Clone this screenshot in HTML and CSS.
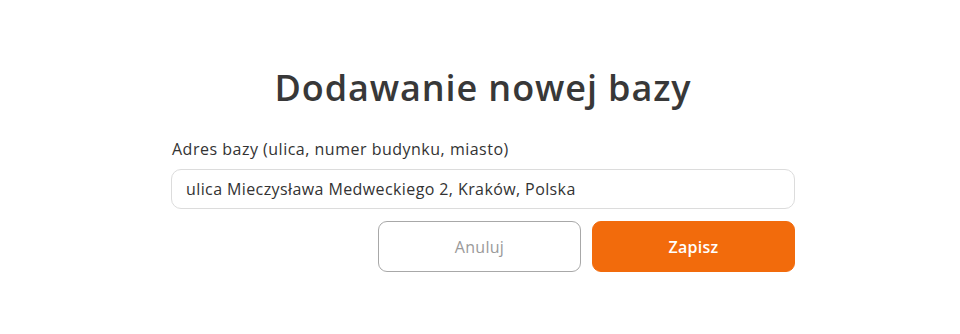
FILE: index.html
```html
<!DOCTYPE html>
<html lang="pl">
<head>
<meta charset="utf-8">
<link rel="stylesheet" href="styles.css">
</head>
<body>
<div class="page">
  <form class="card">
    <h1 class="title">Dodawanie nowej bazy</h1>
    <label class="label" for="addr">Adres bazy (ulica, numer budynku, miasto)</label>
    <div class="input" id="addr">ulica Mieczysława Medweckiego 2, Kraków, Polska</div>
    <div class="actions">
      <button type="button" class="btn btn-cancel">Anuluj</button>
      <button type="button" class="btn btn-save">Zapisz</button>
    </div>
  </form>
</div>
</body>
</html>
```
FILE: styles.css
```css
html, body {
  margin: 0;
  padding: 0;
  background: #ffffff;
}
.page {
  display: flex;
  justify-content: center;
  padding-left: 6px;
  padding-top: 66px;
  font-family: "Open Sans", "Liberation Sans", sans-serif;
}
.card {
  width: 624px;
  display: flex;
  flex-direction: column;
}
.title {
  margin: 0;
  text-align: center;
  font-size: 36px;
  font-weight: 600;
  color: #383838;
  line-height: 44px;
  letter-spacing: 0.9px;
}
.label {
  margin-top: 29px;
  margin-left: 1px;
  font-size: 16px;
  line-height: 20px;
  color: #333333;
  letter-spacing: 0.5px;
}
.input {
  margin-top: 10px;
  height: 40px;
  box-sizing: border-box;
  border: 1px solid #dcdcdc;
  border-radius: 10px;
  padding: 0 14px;
  display: flex;
  align-items: center;
  font-size: 16px;
  color: #333333;
  letter-spacing: 0.4px;
}
.actions {
  margin-top: 12px;
  display: flex;
  justify-content: flex-end;
  gap: 11px;
}
.btn {
  width: 203px;
  height: 51px;
  box-sizing: border-box;
  border-radius: 9px;
  font-family: inherit;
  font-size: 16px;
  font-weight: 400;
  cursor: pointer;
  letter-spacing: 0.3px;
}
.btn-cancel {
  background: #ffffff;
  border: 1px solid #a8a8a8;
  color: #9a9a9a;
}
.btn-save {
  background: #f26b0c;
  border: 1px solid #f26b0c;
  color: #ffffff;
  font-weight: 600;
}
```
